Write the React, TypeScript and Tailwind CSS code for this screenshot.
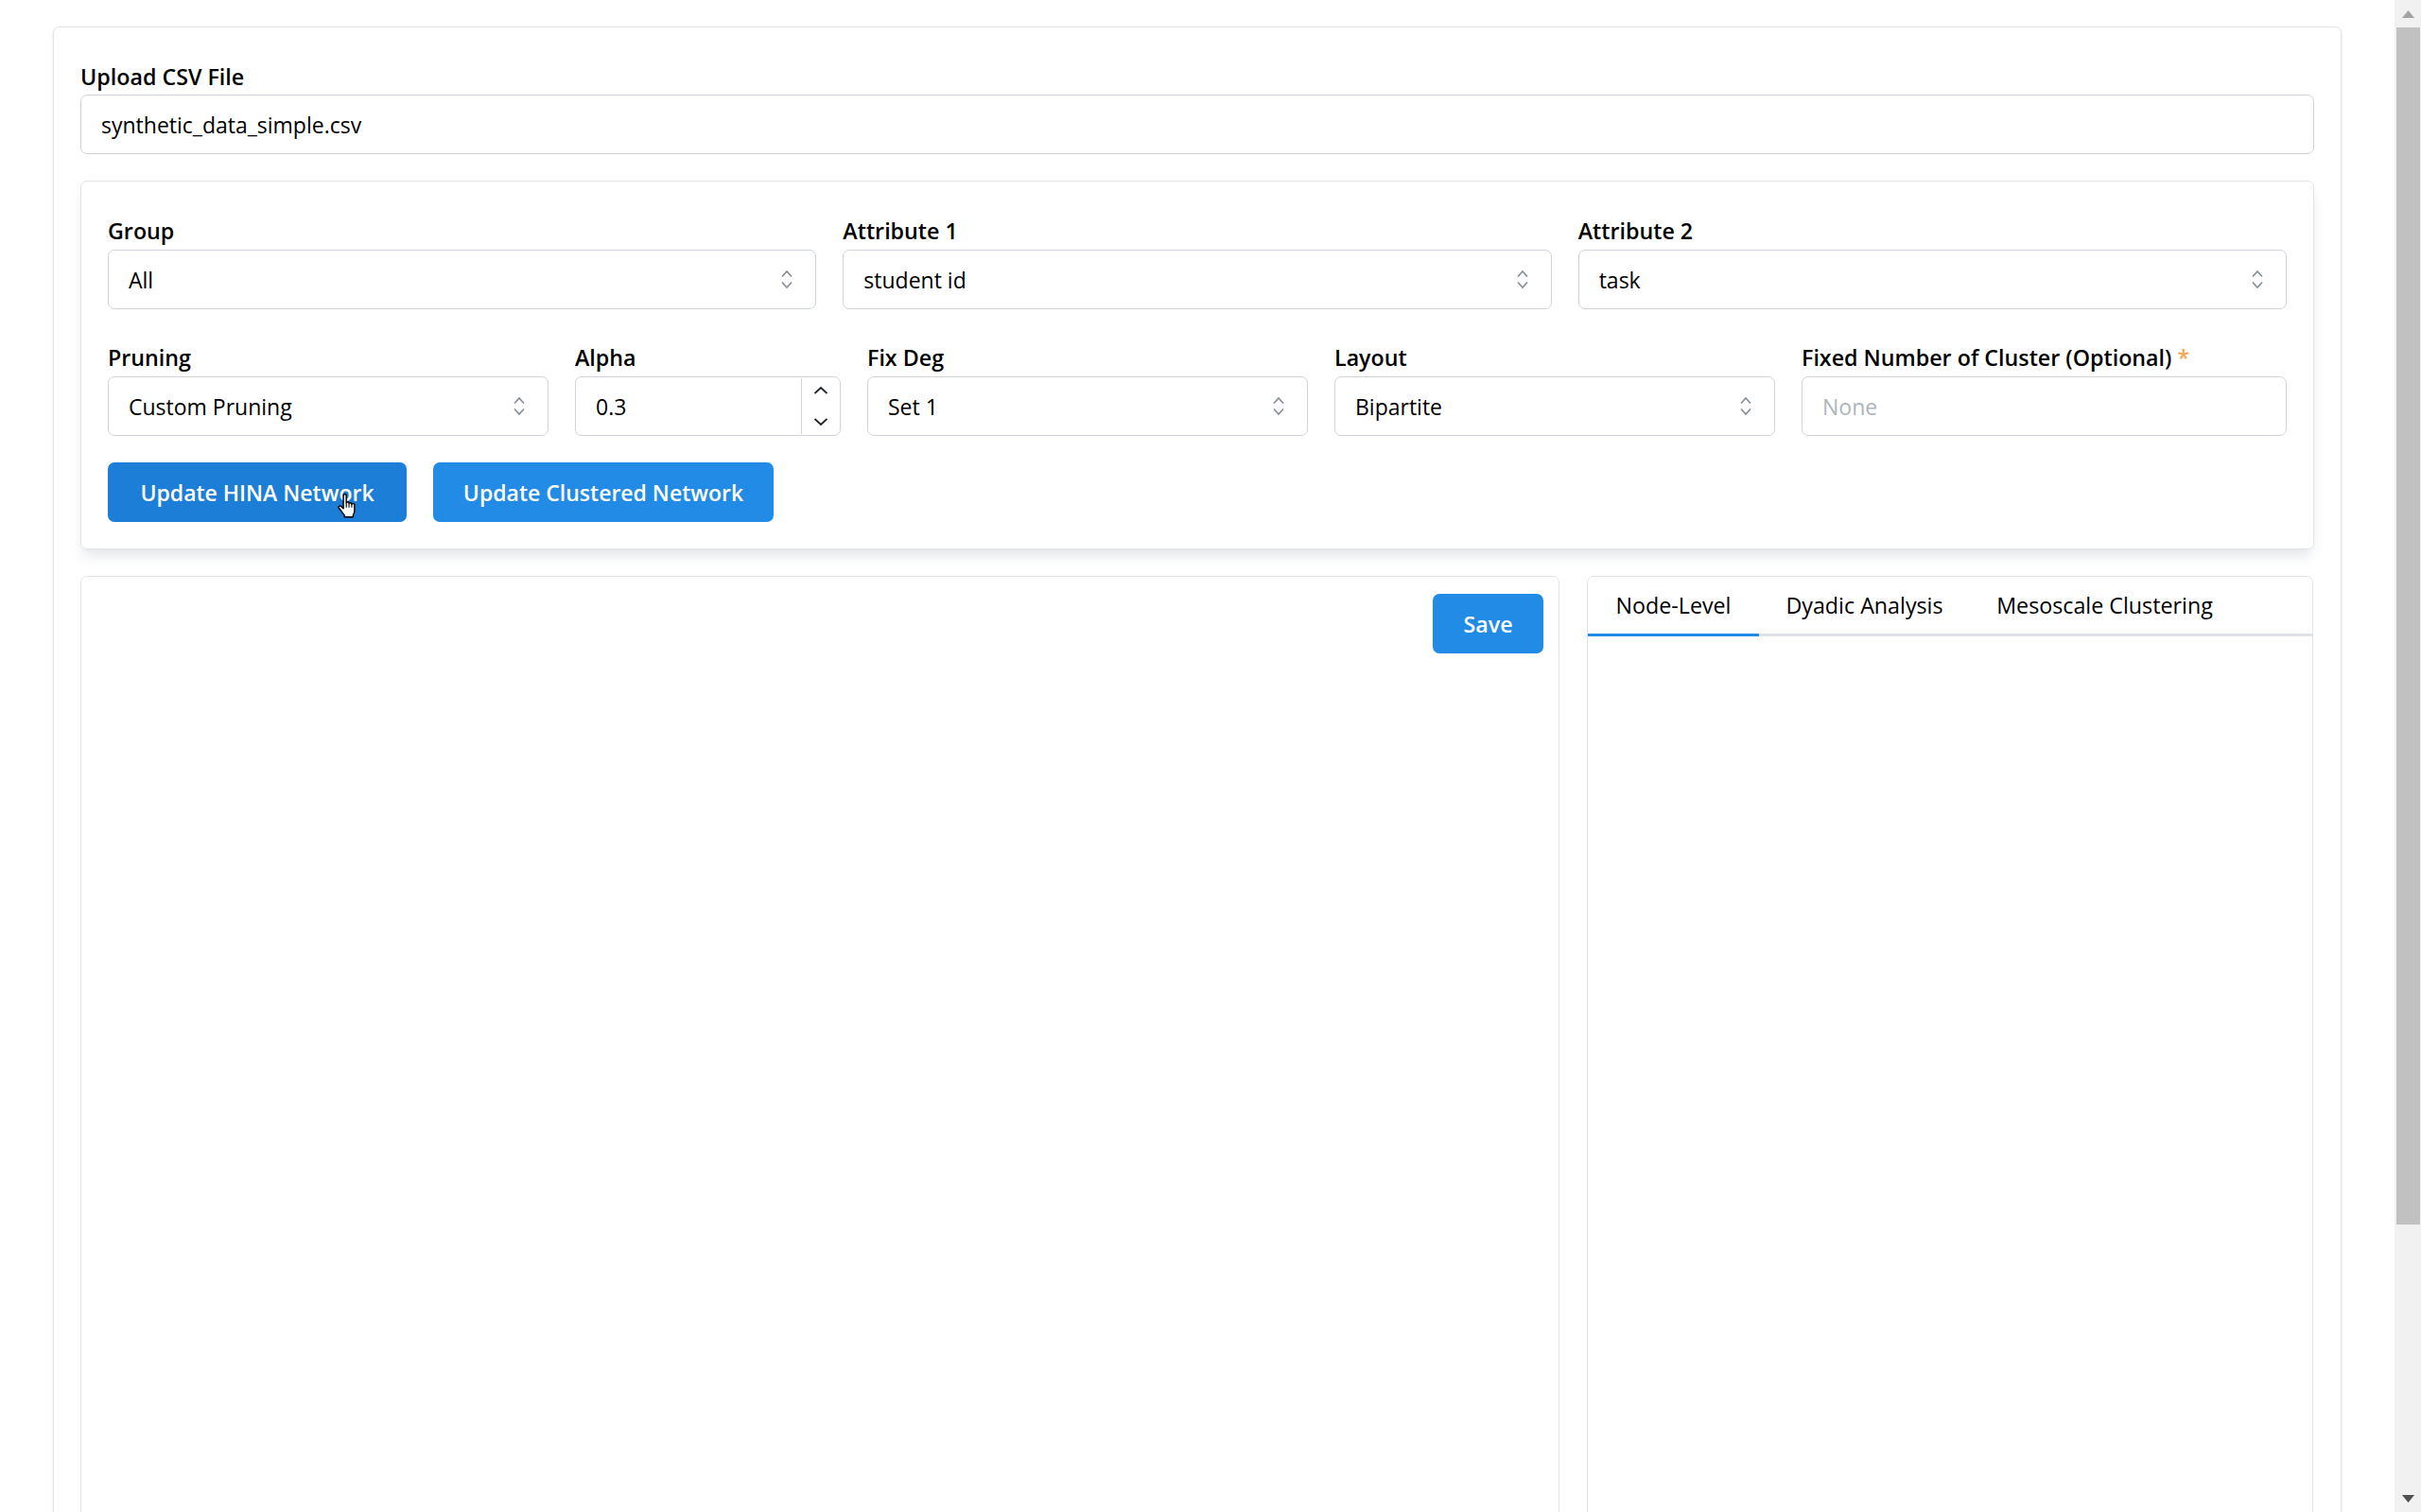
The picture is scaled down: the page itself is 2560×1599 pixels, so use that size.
import React from "react";

const SortIcon = () => (
  <svg width="14" height="21" viewBox="0 0 14 21" fill="none" stroke="#868e96" strokeWidth="1.7">
    <path d="M2 7.5 7 2l5 5.5" />
    <path d="M2 13.5l5 5.5 5-5.5" />
  </svg>
);

const Label = ({ text, required }: { text: string; required?: boolean }) => (
  <label className="block h-[44px] pt-[8px] text-[23.25px] leading-[33px] font-semibold text-black whitespace-nowrap">
    {text}
    {required && <span className="text-[#f2a64c]"> *</span>}
  </label>
);

const SelectField = ({ label, value }: { label: string; value: string }) => (
  <div>
    <Label text={label} />
    <div className="h-[63px] flex items-center justify-between pl-[21px] pr-[23px] border border-[#ced4da] rounded-[7px] bg-white text-[23px] text-black">
      <span className="pt-[2px]">{value}</span>
      <SortIcon />
    </div>
  </div>
);

const Cursor = () => (
  <svg className="absolute left-[243px] top-[32px]" width="21" height="27" viewBox="0 0 19 24" fill="#fff" stroke="#000" strokeWidth="1.3" strokeLinejoin="round">
    <path d="M5.5 2.2C5.5.8 8.3.8 8.3 2.2V9.5C8.3 8.4 10.9 8.4 10.9 9.6V10.2C10.9 9.2 13.5 9.2 13.5 10.4V11C13.5 10 16.2 10 16.2 11.4V16.5C16.2 19 15.5 20 14.8 21.5V23H6.5V21.5C5 19.5 3 16.5 1.2 14.5C.3 13.3 1.7 11.8 3.2 12.8L5.5 15Z" />
    <path d="M8.3 9.5V14M10.9 10.2V14M13.5 11V14" fill="none" strokeWidth="1" />
  </svg>
);

export default function App() {
  return (
    <div className="flex h-screen overflow-hidden bg-white font-['Open_Sans',sans-serif]">
      <main className="flex-1 min-w-0 px-[56px] pt-[28px]">
        <div className="h-[1700px] border border-[#e2e4e8] rounded-[7px] p-[28px] shadow-sm">
          <label className="block h-[43px] pt-[8px] text-[23.25px] leading-[33px] font-semibold text-black">Upload CSV File</label>
          <div className="h-[63px] flex items-center pl-[21px] pt-[2px] border border-[#ced4da] rounded-[7px] text-[23px] text-black">
            synthetic_data_simple.csv
          </div>

          <div className="mt-[28px] border border-[#e2e4e8] rounded-[7px] p-[28px] shadow-lg shadow-gray-200">
            <div className="grid grid-cols-3 gap-[28px]">
              <SelectField label="Group" value="All" />
              <SelectField label="Attribute 1" value="student id" />
              <SelectField label="Attribute 2" value="task" />
            </div>

            <div className="mt-[27px] grid grid-cols-[466px_281px_466px_466px_513px] gap-[28px]">
              <SelectField label="Pruning" value="Custom Pruning" />
              <div>
                <Label text="Alpha" />
                <div className="h-[63px] flex items-stretch border border-[#ced4da] rounded-[7px] text-[23px] text-black">
                  <span className="flex-1 flex items-center pl-[21px] pt-[2px]">0.3</span>
                  <div className="w-[41px] my-[1px] flex flex-col items-center justify-between py-[8px] border-l border-[#ced4da]">
                    <svg width="16" height="10" viewBox="0 0 16 10" fill="none" stroke="#212529" strokeWidth="1.8">
                      <path d="M1.5 8 8 2l6.5 6" />
                    </svg>
                    <svg width="16" height="10" viewBox="0 0 16 10" fill="none" stroke="#212529" strokeWidth="1.8">
                      <path d="M1.5 2 8 8l6.5-6" />
                    </svg>
                  </div>
                </div>
              </div>
              <SelectField label="Fix Deg" value="Set 1" />
              <SelectField label="Layout" value="Bipartite" />
              <div>
                <Label text="Fixed Number of Cluster (Optional)" required />
                <div className="h-[63px] flex items-center pl-[21px] pt-[2px] border border-[#ced4da] rounded-[7px] text-[23px] text-[#adb5bd]">
                  None
                </div>
              </div>
            </div>

            <div className="mt-[28px] flex gap-[28px]">
              <button className="relative w-[316px] h-[63px] pt-[2px] rounded-[7px] bg-[#1c7ed6] text-[23px] font-semibold text-white">
                Update HINA Network
                <Cursor />
              </button>
              <button className="w-[360px] h-[63px] pt-[2px] rounded-[7px] bg-[#228be6] text-[23px] font-semibold text-white">
                Update Clustered Network
              </button>
            </div>
          </div>

          <div className="mt-[28px] grid grid-cols-[1564px_768px] gap-[29px] h-[1100px]">
            <div className="border border-[#e2e4e8] rounded-[7px] flex justify-end items-start pt-[18px] pr-[16px]">
              <button className="w-[117px] h-[63px] pt-[2px] rounded-[7px] bg-[#228be6] text-[23.25px] font-semibold text-white">Save</button>
            </div>
            <div className="border border-[#e2e4e8] rounded-[7px]">
              <div className="flex border-b-[3px] border-[#dee2e6] text-[23.25px] text-black">
                <div className="w-[181px] h-[63px] -mb-[3px] flex items-center justify-center border-b-[3px] border-[#228be6]">Node-Level</div>
                <div className="w-[223px] h-[60px] flex items-center justify-center">Dyadic Analysis</div>
                <div className="w-[285px] h-[60px] flex items-center justify-center">Mesoscale Clustering</div>
              </div>
            </div>
          </div>
        </div>
      </main>

      <div className="w-[28px] flex flex-col bg-[#f1f1f1]">
        <div className="h-[29px] flex items-center justify-center">
          <svg width="13" height="8" viewBox="0 0 13 8" fill="#a3a3a3"><path d="M6.5 0 13 8H0Z" /></svg>
        </div>
        <div className="ml-[2px] w-[25px] h-[1266px] bg-[#c1c1c1]" />
        <div className="flex-1" />
        <div className="h-[29px] flex items-center justify-center">
          <svg width="13" height="8" viewBox="0 0 13 8" fill="#505050"><path d="M0 0H13L6.5 8Z" /></svg>
        </div>
      </div>
    </div>
  );
}
